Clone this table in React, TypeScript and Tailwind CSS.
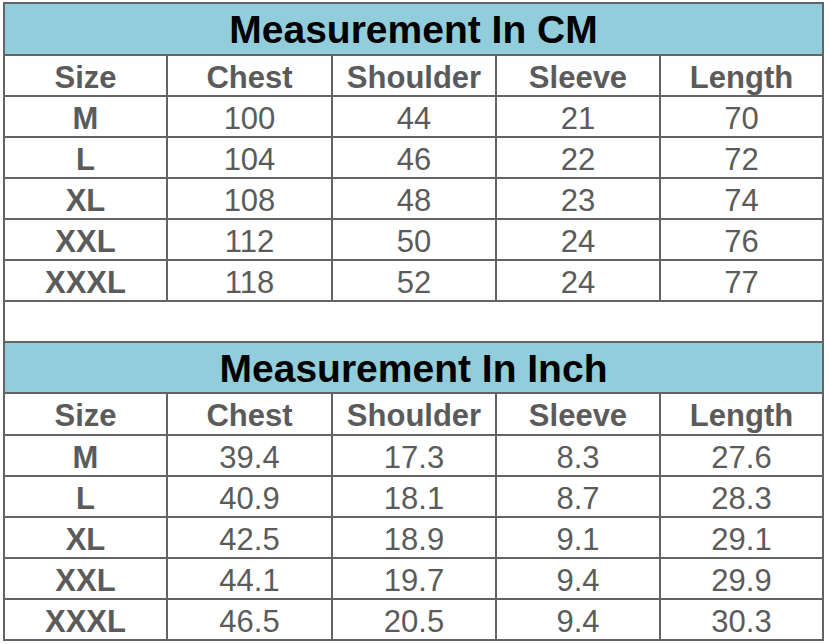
import React from "react";

const cols = ["Size", "Chest", "Shoulder", "Sleeve", "Length"];

const cm: string[][] = [
  ["M", "100", "44", "21", "70"],
  ["L", "104", "46", "22", "72"],
  ["XL", "108", "48", "23", "74"],
  ["XXL", "112", "50", "24", "76"],
  ["XXXL", "118", "52", "24", "77"],
];

const inch: string[][] = [
  ["M", "39.4", "17.3", "8.3", "27.6"],
  ["L", "40.9", "18.1", "8.7", "28.3"],
  ["XL", "42.5", "18.9", "9.1", "29.1"],
  ["XXL", "44.1", "19.7", "9.4", "29.9"],
  ["XXXL", "46.5", "20.5", "9.4", "30.3"],
];

function Title({ text, h }: { text: string; h: string }) {
  return (
    <div
      className={`col-span-5 bg-[#92cddc] flex items-center justify-center pt-[1px] font-bold text-[39px] leading-none text-black ${h}`}
    >
      {text}
    </div>
  );
}

function HeaderRow({ h }: { h: string }) {
  return (
    <>
      {cols.map((c) => (
        <div
          key={c}
          className={`bg-white flex items-center justify-center pt-[3px] font-bold text-[31px] leading-none text-[#5b5b5b] ${h}`}
        >
          {c}
        </div>
      ))}
    </>
  );
}

function DataRows({ rows }: { rows: string[][] }) {
  return (
    <>
      {rows.map((r) =>
        r.map((v, i) => (
          <div
            key={r[0] + i}
            className={`bg-white h-[39px] flex items-center justify-center pt-[4px] text-[31px] leading-none text-[#5b5b5b] ${
              i === 0 ? "font-bold" : "font-normal"
            }`}
          >
            {v}
          </div>
        ))
      )}
    </>
  );
}

export default function App() {
  return (
    <div
      className="w-[829px] h-[644px] bg-white pt-[2px] pl-[3px]"
      style={{ fontFamily: "'Liberation Sans', Arial, Helvetica, sans-serif" }}
    >
      <div className="w-[821px] grid grid-cols-[161px_163px_162px_162px_161px] gap-[2px] p-[2px] bg-[#646464]">
        <Title text="Measurement In CM" h="h-[50px]" />
        <HeaderRow h="h-[39px]" />
        <DataRows rows={cm} />
        <div className="col-span-5 bg-white h-[39px]" />
        <Title text="Measurement In Inch" h="h-[49px]" />
        <HeaderRow h="h-[40px]" />
        <DataRows rows={inch} />
      </div>
    </div>
  );
}
